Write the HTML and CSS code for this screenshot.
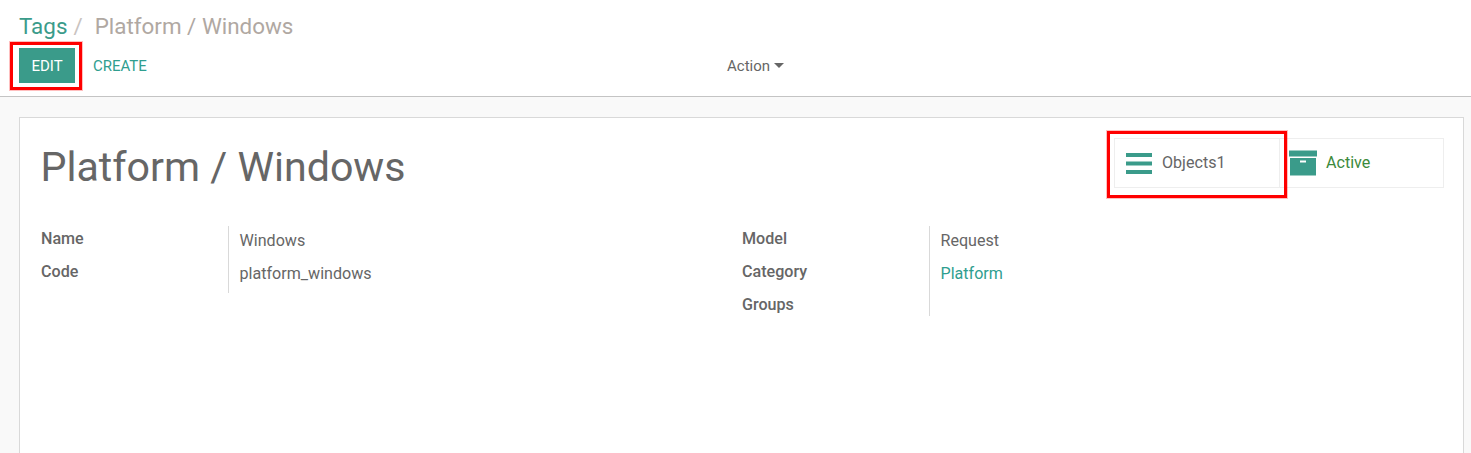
FILE: index.html
```html
<!DOCTYPE html>
<html lang="en">
<head>
<meta charset="utf-8">
<title>Platform / Windows</title>
<link rel="stylesheet" href="styles.css">
</head>
<body>
<header class="panel">
  <nav class="crumbs"><a class="crumb-link">Tags</a><span class="crumb-sep">/</span><span class="crumb-current">Platform / Windows</span></nav>
  <div class="panel-row">
    <div class="panel-buttons">
      <button class="btn-edit">EDIT</button>
      <button class="btn-create">CREATE</button>
    </div>
    <div class="panel-action">Action<span class="caret"></span></div>
  </div>
  <span class="callout callout-edit"></span>
</header>
<main class="content">
  <section class="sheet">
    <div class="stat-row">
      <div class="stat stat-objects">
        <svg class="stat-icon" width="26" height="24" viewBox="0 0 26 24"><rect x="0" y="2" width="26" height="4"/><rect x="0" y="10.5" width="26" height="4"/><rect x="0" y="19" width="26" height="4"/></svg>
        <span class="stat-text">Objects1</span>
      </div>
      <div class="stat stat-archive">
        <svg class="stat-icon" width="28" height="26" viewBox="0 0 28 26"><path fill-rule="evenodd" d="M0 .5h28v6H0z M1 8h26v17.5H1z M11 10.5v2h6v-2z"/></svg>
        <span class="stat-text stat-active">Active</span>
      </div>
      <span class="callout callout-stat"></span>
    </div>
    <h1 class="title">Platform / Windows</h1>
    <div class="groups">
      <dl class="group">
        <dt>Name</dt><dd>Windows</dd>
        <dt>Code</dt><dd>platform_windows</dd>
      </dl>
      <dl class="group">
        <dt>Model</dt><dd>Request</dd>
        <dt>Category</dt><dd><a class="link">Platform</a></dd>
        <dt>Groups</dt><dd></dd>
      </dl>
    </div>
  </section>
</main>
</body>
</html>
```

FILE: styles.css
```css
* { box-sizing: border-box; }
html, body { height: 100%; }
body {
  display: flex;
  flex-direction: column;
  margin: 0;
  font-family: Roboto, "Noto Sans", sans-serif;
  font-size: 16.1px;
  color: #666;
  background: #f9f9f9;
  overflow: hidden;
}
.panel {
  position: relative;
  flex: none;
  height: 97px;
  padding: 10px 19px 0;
  background: #fff;
  border-bottom: 1px solid #c4c4c4;
}
.crumbs {
  display: flex;
  align-items: baseline;
  height: 33px;
  font-size: 22.4px;
  line-height: 33px;
}
.crumb-link { color: #3a9b8a; }
.crumb-sep { margin: 0 12px 0 6px; color: #c9c3bf; }
.crumb-current { color: #b0a8a2; }
.panel-row { display: grid; grid-template-columns: 708px auto; height: 36px; margin-top: 4px; }
.panel-buttons { display: flex; align-items: center; gap: 1px; }
button { font: inherit; border: 0; cursor: pointer; }
.btn-edit {
  width: 56px;
  height: 35px;
  padding: 1px 0 0;
  font-size: 15px;
  color: #fff;
  background: #3a9b8a;
}
.btn-create {
  padding: 1px 17px 0;
  height: 35px;
  font-size: 15px;
  color: #2f9e8f;
  background: none;
}
.panel-action { display: flex; align-items: center; font-size: 15px; height: 36px; padding-top: 1px; }
.caret {
  margin-left: 4px;
  border-top: 5px solid #666;
  border-left: 5px solid transparent;
  border-right: 5px solid transparent;
}
.callout {
  position: absolute;
  border: 3px solid #f00;
  box-shadow: 0 0 0 1px rgba(255, 0, 0, .25);
  pointer-events: none;
}
.callout-edit { left: 10px; top: 42px; width: 72px; height: 48px; }
.callout-stat { left: -8px; top: -8px; width: 180px; height: 67px; }
.content { flex: 1; min-height: 0; padding: 20px 7px 0 19px; }
.sheet {
  position: relative;
  height: 100%;
  padding: 20px 20px 0 21px;
  background: #fff;
  border: 1px solid #d9d9d9;
  border-bottom: 0;
}
.stat-row {
  position: absolute;
  top: 20px;
  right: 19px;
  display: flex;
  height: 50px;
  border: 1px solid #eee;
}
.stat {
  display: flex;
  align-items: center;
  width: 164px;
}
.stat-objects { padding-left: 11px; gap: 10px; }
.stat-archive { padding-left: 9px; gap: 9px; border-left: 1px solid #eee; }
.stat-icon { fill: #3a9b8a; flex: none; }
.stat-text { font-size: 16.1px; margin-top: -2px; }
.stat-active { color: #3c8a3c; }
.title {
  margin: 0 0 0 -.5px;
  font-size: 41.15px;
  font-weight: 400;
  line-height: 58px;
  color: #666;
}
.groups {
  display: grid;
  grid-template-columns: 701px 1fr;
  margin-top: 30px;
}
.group {
  display: grid;
  grid-template-columns: 187px 1fr;
  align-content: start;
  margin: 0;
}
dt { padding-top: 1px; font-weight: 500; font-size: 16.1px; line-height: 24px; }
dd { height: 33px; margin: 0; padding: 3px 0 0 10.5px; font-size: 16.1px; line-height: 24px; border-left: 1px solid #d9d9d9; }
dd:last-child { height: 34px; }
dd:empty { height: 24px; }
.link { color: #2f9e8f; }
```
